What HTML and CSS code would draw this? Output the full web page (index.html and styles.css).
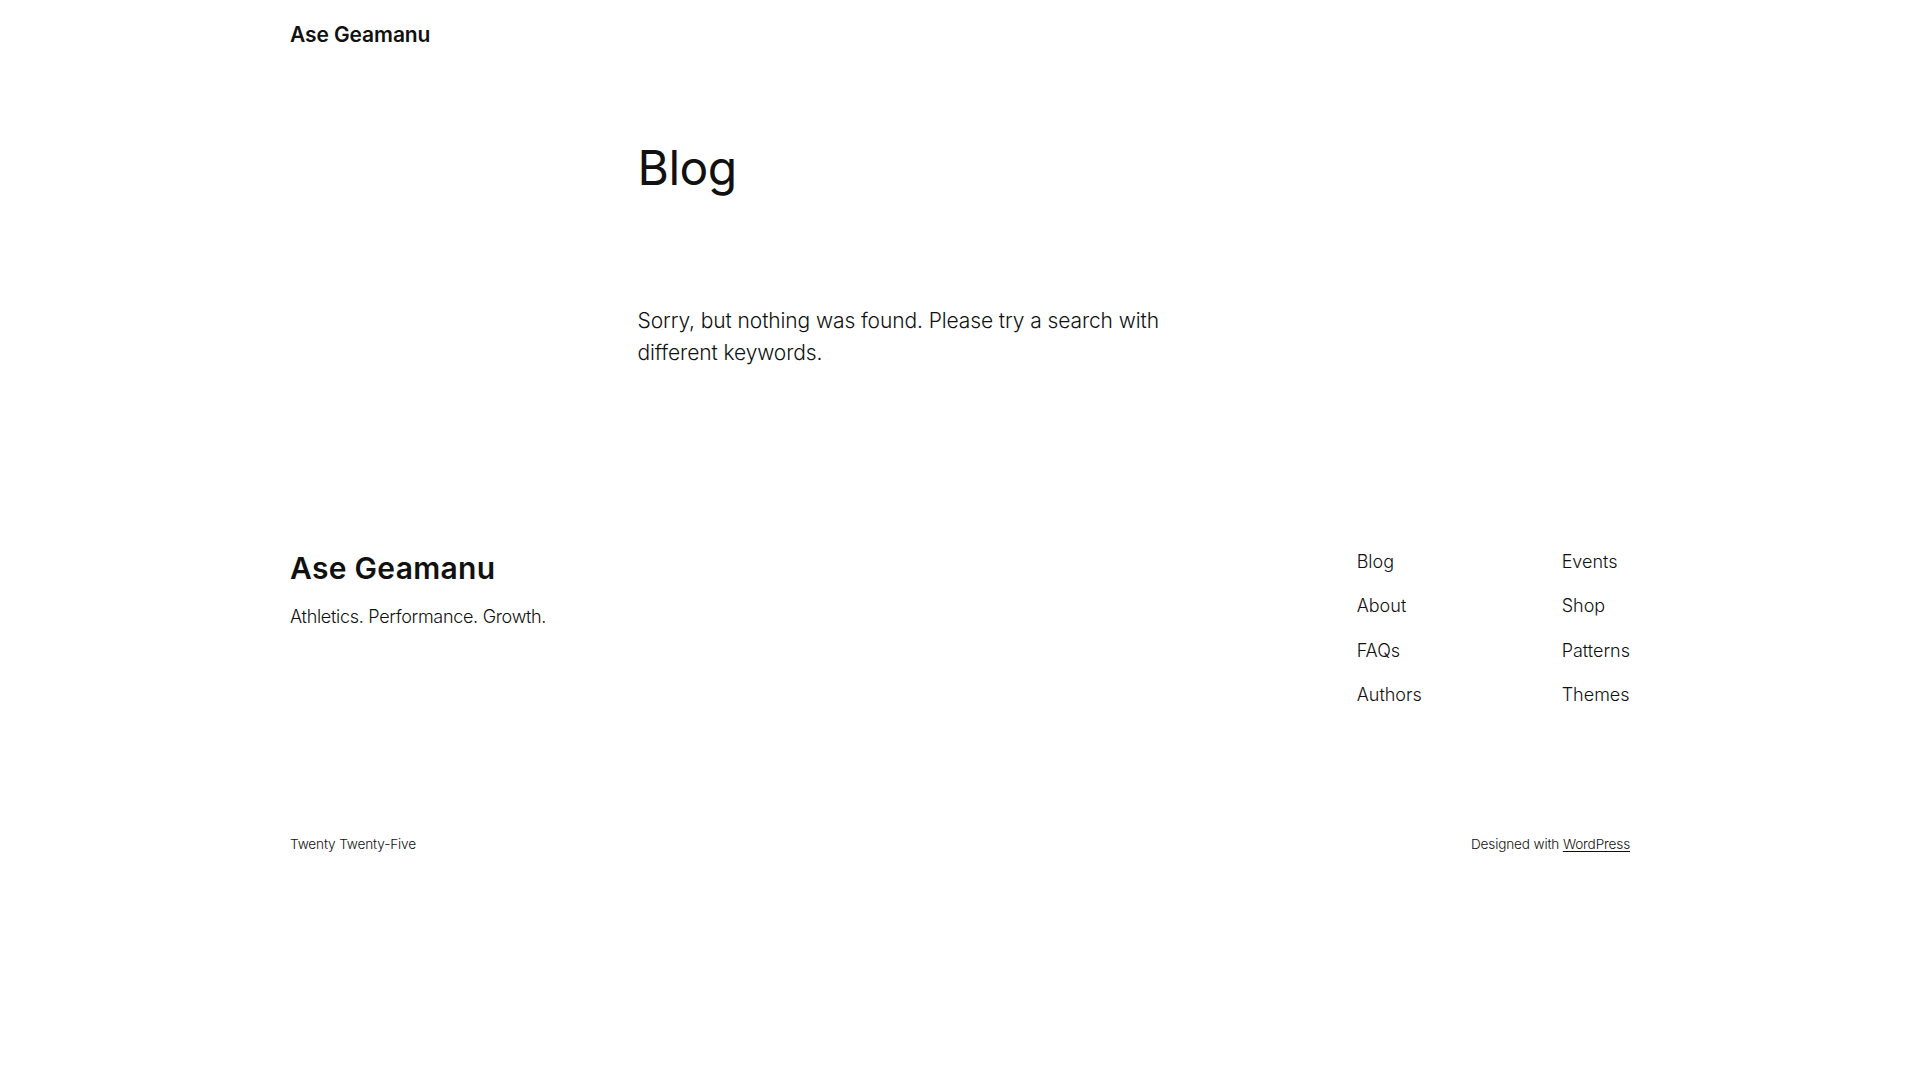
FILE: index.html
```html
<!DOCTYPE html>
<html lang="en">
<head>
<meta charset="utf-8">
<title>Blog – Ase Geamanu</title>
<link rel="stylesheet" href="styles.css">
</head>
<body>
<header class="site-header">
  <a class="site-title" href="#">Ase Geamanu</a>
</header>
<main class="main">
  <h1 class="page-title">Blog</h1>
  <p class="no-results">Sorry, but nothing was found. Please try a search with different keywords.</p>
</main>
<footer class="site-footer">
  <div class="footer-top">
    <div class="footer-brand">
      <h2 class="footer-title">Ase Geamanu</h2>
      <p class="tagline">Athletics. Performance. Growth.</p>
    </div>
    <nav class="footer-nav">
      <ul class="nav-col nav-col-first">
        <li><a href="#">Blog</a></li>
        <li><a href="#">About</a></li>
        <li><a href="#">FAQs</a></li>
        <li><a href="#">Authors</a></li>
      </ul>
      <ul class="nav-col">
        <li><a href="#">Events</a></li>
        <li><a href="#">Shop</a></li>
        <li><a href="#">Patterns</a></li>
        <li><a href="#">Themes</a></li>
      </ul>
    </nav>
  </div>
  <div class="footer-bottom">
    <span class="credit">Twenty Twenty-Five</span>
    <span class="credit">Designed with <a class="credit-link" href="#">WordPress</a></span>
  </div>
</footer>
</body>
</html>
```

FILE: styles.css
```css
* { box-sizing: border-box; }

html, body {
  margin: 0;
  padding: 0;
  background: #ffffff;
}

body {
  font-family: Inter, "Noto Sans", "Liberation Sans", sans-serif;
  font-weight: 300;
  color: #111111;
}

a { color: inherit; text-decoration: none; }

.site-header {
  width: 1340px;
  margin: 0 auto;
  padding: 21px 0;
}

.site-title {
  display: block;
  font-size: 21px;
  line-height: 28px;
  font-weight: 600;
  letter-spacing: -0.1px;
}

.main {
  width: 645px;
  margin: 0 auto;
  padding-top: 71px;
}

.page-title {
  margin: 0;
  font-size: 48px;
  line-height: 54px;
  font-weight: 400;
  letter-spacing: -0.5px;
}

.no-results {
  max-width: 560px;
  margin: 110px 0 0;
  font-size: 21px;
  line-height: 32px;
  letter-spacing: -0.1px;
}

.site-footer {
  width: 1340px;
  margin: 0 auto;
  padding-top: 180px;
}

.footer-top {
  display: flex;
  justify-content: space-between;
  align-items: flex-start;
}

.footer-title {
  margin: 2px 0 0;
  font-size: 30px;
  line-height: 34px;
  font-weight: 600;
  letter-spacing: 0.3px;
}

.tagline {
  margin: 19px 0 0;
  font-size: 18px;
  line-height: 25px;
  letter-spacing: -0.3px;
}

.footer-nav {
  display: flex;
}

.nav-col {
  list-style: none;
  margin: 0;
  padding: 0;
  display: flex;
  flex-direction: column;
  gap: 19px;
  font-size: 18px;
  line-height: 25.3px;
  letter-spacing: 0;
}

.nav-col-first { width: 205px; }

.footer-bottom {
  display: flex;
  justify-content: space-between;
  margin-top: 128px;
  padding-bottom: 40px;
}

.credit {
  font-size: 13.6px;
  line-height: 19px;
  letter-spacing: -0.15px;
}

.credit-link { text-decoration: underline; text-underline-offset: 2px; }
```
